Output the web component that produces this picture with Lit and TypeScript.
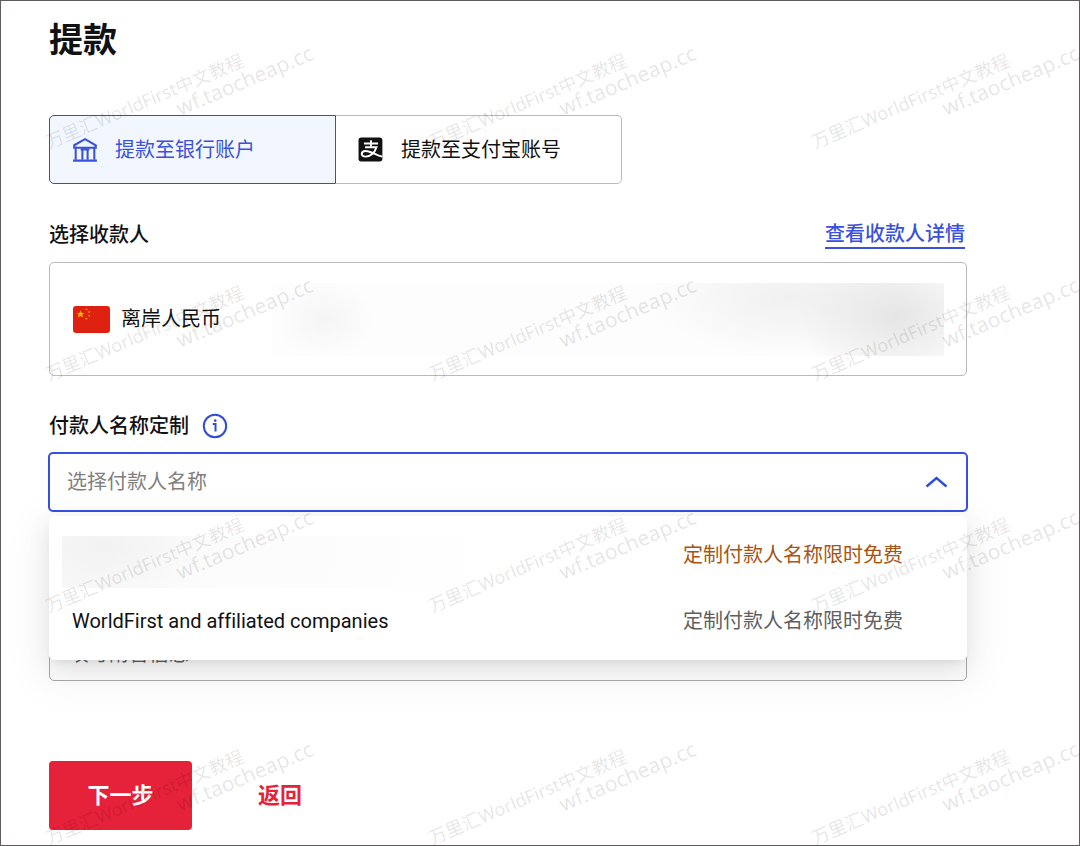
import { LitElement, html, css, svg } from "lit";
import { customElement, state } from "lit/decorators.js";

const bankIcon = svg`<path d="M2 7.6L12 2L22 7.6V10H2Z" stroke-width="1.9" /><path d="M3.4 9V21M20.6 9V21M9.6 12V21M14.4 12V21" stroke-width="1.9" /><path d="M8 11.4H16M1 21.8H23" stroke-width="1.9" />`;

@customElement("wf-watermark")
class WfWatermark extends LitElement {
  static styles = css`
    :host {
      position: absolute;
      inset: 0;
      z-index: 2;
      overflow: hidden;
      pointer-events: none;
    }
    .tiles {
      display: grid;
      grid-template-columns: repeat(3, 383px);
      grid-auto-rows: 232px;
      padding: 36px 0 0 36px;
    }
    .mark {
      width: 270px;
      height: 130px;
      overflow: visible;
      fill: rgba(0, 0, 0, 0.11);
      font-family: "Noto Sans", "Noto Sans CJK SC", sans-serif;
    }
    .line1 { font-size: 18px; font-weight: 400; }
    .line2 { font-size: 21px; font-weight: 400; }
  `;
  render() {
    return html`<div class="tiles" aria-hidden="true">
      ${Array.from({ length: 12 }, () => html`<svg class="mark" viewBox="0 0 270 130">
        <text class="line1" transform="translate(12 112) rotate(-23)">万里汇WorldFirst中文教程</text>
        <text class="line2" transform="translate(143 79) rotate(-23)">wf.taocheap.cc</text>
      </svg>`)}
    </div>`;
  }
}

@customElement("app-root")
class AppRoot extends LitElement {
  @state() target = "bank";

  static styles = css`
    :host {
      display: block;
      position: relative;
      min-height: 100vh;
      box-sizing: border-box;
      overflow: hidden;
      border: 1px solid #5e5a5d;
      background: #fff;
      color: #111;
      font: 20px/28px Roboto, "Noto Sans CJK SC", sans-serif;
      font-variant-ligatures: none;
    }
    * { box-sizing: border-box; }
    button, input, select { font: inherit; color: inherit; margin: 0; }
    button { cursor: pointer; }
    .page { padding: 14px 112px 0 48px; }
    h1 { margin: 0; font-size: 34px; line-height: 50px; font-weight: 700; }
    .tabs { display: grid; grid-template-columns: 287px 286px; margin-top: 50px; }
    .tab {
      display: flex;
      align-items: center;
      gap: 17px;
      height: 69px;
      padding: 0 22px;
      border: 1px solid #b9b9b9;
      background: #fff;
      border-radius: 0 5px 5px 0;
    }
    .tab:first-child { border-radius: 5px 0 0 5px; }
    .tab + .tab { border-left: 0; }
    .tab.on { border: 1px solid #2f4bdc; background: #f2f7ff; color: #3a51dc; }
    .icon { width: 26px; height: 26px; flex: none; }
    .line { fill: none; stroke: currentColor; stroke-width: 2; }
    .head { display: flex; justify-content: space-between; align-items: center; height: 28px; margin: 37px 2px 13px 0; }
    .label { font-weight: 500; }
    .link { color: #3a51dc; font-weight: 500; text-decoration: none; border-bottom: 2px solid #3a51dc; line-height: 26px; }
    .payee {
      display: flex;
      align-items: center;
      width: 100%;
      height: 114px;
      padding: 0 22px 0 23px;
      border: 1px solid #b9b9b9;
      border-radius: 5px;
      background: #fff;
    }
    .flag { width: 37px; height: 27px; margin-right: 11px; flex: none; }
    .masked {
      flex: 1;
      height: 73px;
      margin-left: 50px;
      background:
        radial-gradient(ellipse 100px 70px at 93% 45%, #e5e5e5, rgba(240, 240, 240, 0)),
        radial-gradient(ellipse 140px 60px at 77% 20%, #f0f0f0, rgba(250, 250, 250, 0)),
        radial-gradient(ellipse 50px 40px at 8% 50%, #f5f5f5, rgba(252, 252, 252, 0)),
        #fdfdfd;
    }
    .info { display: flex; align-items: center; gap: 13px; height: 28px; margin: 36px 0 12px; }
    .infobtn { padding: 0; border: 0; background: none; color: #2f4bdc; display: flex; }
    .picker { position: relative; margin: 0 -1px; }
    .select {
      appearance: none;
      display: block;
      width: 100%;
      height: 60px;
      padding: 0 60px 0 17px;
      border: 2px solid #3650e0;
      border-radius: 5px;
      background: #fff;
      color: #808080;
      outline: none;
    }
    .caret { position: absolute; right: 20px; top: 23px; width: 23px; height: 14px; color: #2f4bdc; }
    .menu {
      position: absolute;
      z-index: 1;
      top: 64px;
      left: 1px;
      right: 1px;
      margin: 0;
      padding: 6px 13px;
      border-radius: 5px;
      background: #fff;
      box-shadow: 0 4px 8px -5px rgba(0, 0, 0, 0.12), 0 8px 22px rgba(0, 0, 0, 0.08), 0 12px 40px 11px rgba(0, 0, 0, 0.05);
    }
    .option {
      display: flex;
      align-items: center;
      justify-content: space-between;
      width: 100%;
      height: 66px;
      padding: 0 51px 0 10px;
      border: 0;
      background: none;
      text-align: left;
    }
    .option.first { color: #a85412; padding-left: 0; }
    .note { color: #606060; }
    .first .note { color: inherit; }
    .blank {
      width: 400px;
      height: 52px;
      margin-top: 14px;
      background: radial-gradient(ellipse 110px 60px at 10% 20%, #f2f2f2, rgba(252, 252, 252, 0)), linear-gradient(100deg, #fafafa, #fefefe);
    }
    .remark {
      display: block;
      width: 100%;
      height: 60px;
      margin-top: 109px;
      padding: 6px 19px 0;
      border: 1px solid #aaa;
      border-radius: 5px;
      background: #fff;
    }
    .remark::placeholder { color: #606060; opacity: 1; }
    .actions { display: flex; gap: 48px; margin-top: 80px; padding-bottom: 15px; font-size: 22px; font-weight: 700; }
    .next { width: 143px; height: 69px; border: 0; border-radius: 4px; background: #e6213a; color: #fff; }
    .back { height: 69px; padding: 0 18px; border: 0; background: none; color: #e6213a; }
  `;

  render() {
    return html`
      <main class="page">
        <h1>提款</h1>
        <div class="tabs" role="tablist">
          <button class="tab ${this.target === "bank" ? "on" : ""}" role="tab" @click=${() => (this.target = "bank")}>
            <svg class="icon line" viewBox="0 0 24 24">${bankIcon}</svg>提款至银行账户
          </button>
          <button class="tab ${this.target === "alipay" ? "on" : ""}" role="tab" @click=${() => (this.target = "alipay")}>
            <svg class="icon" viewBox="0 0 24 24">
              <rect x="0.5" y="0.5" width="22" height="22" rx="2.5" fill="#111" />
              <path d="M5.5 6H18.5M12 3V9.1M6.5 9.5H17C15.5 14.6 11.5 18.1 7 18.1C2 18.1 2.5 13.1 7 12.9C12 12.8 16 16.6 22.5 18.1" fill="none" stroke="#fff" stroke-width="1.8" />
            </svg>提款至支付宝账号
          </button>
        </div>

        <div class="head">
          <span class="label" id="payee">选择收款人</span>
          <a class="link" href="#payee">查看收款人详情</a>
        </div>
        <button class="payee" aria-labelledby="payee">
          <svg class="flag" viewBox="0 0 37 27">
            <rect width="37" height="27" rx="3" fill="#de2110" />
            <path d="M7.5 4.2L8.6 7H11.4L9.2 8.8L10 11.6L7.5 10L5 11.6L5.8 8.8L3.6 7H6.4Z" fill="#ffb400" />
            <path d="M12.5 3.5h2M15.5 5.5l1.5 1M15.5 10l1.5-.6M12.5 13l1.8-.8" stroke="#f08a00" stroke-width="1.6" />
          </svg>
          离岸人民币
          <span class="masked"></span>
        </button>

        <div class="info">
          <label class="label" for="payer">付款人名称定制</label>
          <button class="infobtn" aria-label="付款人名称定制">
            <svg class="icon" viewBox="0 0 26 26">
              <circle cx="13" cy="13" r="11.2" fill="none" stroke="currentColor" stroke-width="2" />
              <path d="M10.8 11H13.5V18.5" fill="none" stroke="currentColor" stroke-width="2" />
              <circle cx="13.2" cy="7.6" r="1.3" fill="currentColor" />
            </svg>
          </button>
        </div>
        <div class="picker">
          <select class="select" id="payer"><option>选择付款人名称</option></select>
          <svg class="caret line" viewBox="0 0 23 14"><path d="M1.5 11.5L11.5 3L21.5 11.5" stroke-width="2.4" /></svg>
          <div class="menu" role="listbox">
            <button class="option first" role="option"><span class="blank"></span><span class="note">定制付款人名称限时免费</span></button>
            <button class="option" role="option"><span>WorldFirst and affiliated companies</span><span class="note">定制付款人名称限时免费</span></button>
          </div>
        </div>
        <input class="remark" aria-label="填写附言信息" placeholder="填写附言信息" />

        <div class="actions">
          <button class="next">下一步</button>
          <button class="back">返回</button>
        </div>
      </main>
      <wf-watermark></wf-watermark>
    `;
  }
}
